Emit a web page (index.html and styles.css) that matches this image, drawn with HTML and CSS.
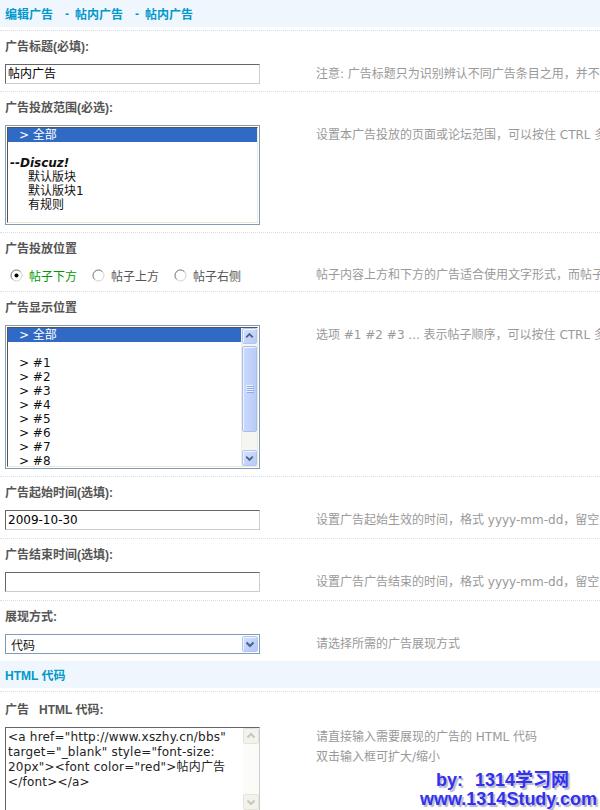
FILE: index.html
```html
<!DOCTYPE html>
<html>
<head>
<meta charset="utf-8">
<title>编辑广告</title>
<link rel="stylesheet" href="styles.css">
</head>
<body>
<div class="page">
  <div class="partition"><span>编辑广告</span><span class="sep">-</span><span>帖内广告</span><span class="sep">-</span><span>帖内广告</span></div>

  <div class="sect">
    <div class="label">广告标题(必填):</div>
    <div class="ctrl">
      <div class="cell"><div class="txt">帖内广告</div></div>
      <div class="tips">注意: 广告标题只为识别辨认不同广告条目之用，并不会在广告中显示</div>
    </div>
  </div>

  <div class="sect">
    <div class="label">广告投放范围(必选):</div>
    <div class="ctrl">
      <div class="cell">
        <div class="listbox lb-range">
          <div class="lb-inner">
            <div class="opts">
              <div class="opt sel ind1">&gt; 全部</div>
              <div class="opt"></div>
              <div class="opt ind0"><span class="grp">--Discuz!</span></div>
              <div class="opt ind2">默认版块</div>
              <div class="opt ind2">默认版块1</div>
              <div class="opt ind2">有规则</div>
            </div>
          </div>
        </div>
      </div>
      <div class="tips">设置本广告投放的页面或论坛范围，可以按住 CTRL 多选，选择“全部”为不限制</div>
    </div>
  </div>

  <div class="sect">
    <div class="label">广告投放位置</div>
    <div class="ctrl">
      <div class="cell">
        <div class="radios">
          <div class="radio on">
            <svg width="13" height="13" viewBox="0 0 13 13"><circle cx="6.5" cy="6.5" r="5.5" fill="#fff" stroke="#D2D0C4"/><path d="M2.6 10.4 A5.5 5.5 0 0 1 10.4 2.6" fill="none" stroke="#85847A"/><circle cx="6.5" cy="6.5" r="2" fill="#000"/></svg>
            <span>帖子下方</span>
          </div>
          <div class="radio">
            <svg width="13" height="13" viewBox="0 0 13 13"><circle cx="6.5" cy="6.5" r="5.5" fill="#fff" stroke="#D2D0C4"/><path d="M2.6 10.4 A5.5 5.5 0 0 1 10.4 2.6" fill="none" stroke="#85847A"/></svg>
            <span>帖子上方</span>
          </div>
          <div class="radio">
            <svg width="13" height="13" viewBox="0 0 13 13"><circle cx="6.5" cy="6.5" r="5.5" fill="#fff" stroke="#D2D0C4"/><path d="M2.6 10.4 A5.5 5.5 0 0 1 10.4 2.6" fill="none" stroke="#85847A"/></svg>
            <span>帖子右侧</span>
          </div>
        </div>
      </div>
      <div class="tips tips-radio">帖子内容上方和下方的广告适合使用文字形式，而帖子右侧的广告适合使用图片形式</div>
    </div>
  </div>

  <div class="sect">
    <div class="label">广告显示位置</div>
    <div class="ctrl">
      <div class="cell">
        <div class="listbox lb-pos">
          <div class="lb-inner">
            <div class="opts">
              <div class="opt sel ind1">&gt; 全部</div>
              <div class="opt"></div>
              <div class="opt ind1">&gt; #1</div>
              <div class="opt ind1">&gt; #2</div>
              <div class="opt ind1">&gt; #3</div>
              <div class="opt ind1">&gt; #4</div>
              <div class="opt ind1">&gt; #5</div>
              <div class="opt ind1">&gt; #6</div>
              <div class="opt ind1">&gt; #7</div>
              <div class="opt ind1">&gt; #8</div>
            </div>
            <div class="sb">
              <div class="sb-btn"><svg width="14" height="14" viewBox="0 0 14 14"><path d="M3.5 8.5 L7 5 L10.5 8.5" fill="none" stroke="#4D6185" stroke-width="2"/></svg></div>
              <div class="sb-thumb"><svg width="8" height="8" viewBox="0 0 8 8"><path d="M0 0.5 H7 M0 2.5 H7 M0 4.5 H7 M0 6.5 H7" stroke="#EEF3FE"/><path d="M1 1.5 H8 M1 3.5 H8 M1 5.5 H8 M1 7.5 H8" stroke="#8DAAF0"/></svg></div>
              <div class="sb-track"></div>
              <div class="sb-btn"><svg width="14" height="14" viewBox="0 0 14 14"><path d="M3.5 5.5 L7 9 L10.5 5.5" fill="none" stroke="#4D6185" stroke-width="2"/></svg></div>
            </div>
          </div>
        </div>
      </div>
      <div class="tips">选项 #1 #2 #3 ... 表示帖子顺序，可以按住 CTRL 多选，选择“全部”为不限制</div>
    </div>
  </div>

  <div class="sect sect-tall">
    <div class="label">广告起始时间(选填):</div>
    <div class="ctrl">
      <div class="cell"><div class="txt">2009-10-30</div></div>
      <div class="tips">设置广告起始生效的时间，格式 yyyy-mm-dd，留空为不限制起始时间</div>
    </div>
  </div>

  <div class="sect sect-tall">
    <div class="label">广告结束时间(选填):</div>
    <div class="ctrl">
      <div class="cell"><div class="txt"></div></div>
      <div class="tips">设置广告广告结束的时间，格式 yyyy-mm-dd，留空为不限制结束时间</div>
    </div>
  </div>

  <div class="sect">
    <div class="label">展现方式:</div>
    <div class="ctrl">
      <div class="cell">
        <div class="dropdown">
          <span>代码</span>
          <div class="dd-btn"><svg width="14" height="14" viewBox="0 0 14 14"><path d="M3.5 5.5 L7 9 L10.5 5.5" fill="none" stroke="#4D6185" stroke-width="2"/></svg></div>
        </div>
      </div>
      <div class="tips">请选择所需的广告展现方式</div>
    </div>
  </div>

  <div class="partition">HTML 代码</div>

  <div class="sect sect-code">
    <div class="label">广告<span class="gap"></span>HTML 代码:</div>
    <div class="ctrl">
      <div class="cell">
        <div class="textarea">
          <div class="ta-text">&lt;a href="http://www.xszhy.cn/bbs"<br>target="_blank" style="font-size:<br>20px"&gt;&lt;font color="red"&gt;帖内广告<br>&lt;/font&gt;&lt;/a&gt;</div>
          <div class="ta-sb">
            <div class="ta-btn"><svg width="14" height="14" viewBox="0 0 14 14"><path d="M3.5 8.5 L7 5 L10.5 8.5" fill="none" stroke="#C9C7BA" stroke-width="2"/></svg></div>
            <div class="ta-track"></div>
            <div class="ta-btn"><svg width="14" height="14" viewBox="0 0 14 14"><path d="M3.5 5.5 L7 9 L10.5 5.5" fill="none" stroke="#C9C7BA" stroke-width="2"/></svg></div>
          </div>
        </div>
      </div>
      <div class="tips">请直接输入需要展现的广告的 HTML 代码<br>双击输入框可扩大/缩小</div>
    </div>
  </div>
</div>

<div class="watermark">
  <div class="wm1">by:<span class="wm-num">1314</span>学习网</div>
  <div class="wm2">www.1314Study.com</div>
</div>
</body>
</html>
```

FILE: styles.css
```css
* {
  box-sizing: border-box;
}

html, body {
  margin: 0;
  padding: 0;
}

body {
  width: 600px;
  height: 810px;
  overflow: hidden;
  position: relative;
  background: #fff;
  font-family: "DejaVu Sans", "Noto Sans CJK SC", sans-serif;
  font-size: 12px;
  color: #000;
}

.page {
  width: 600px;
}

.partition {
  height: 27px;
  margin-bottom: 3px;
  padding-left: 5px;
  display: flex;
  align-items: center;
  background: #F0F6FD;
  color: #0099CC;
  font-weight: bold;
  font-family: "Liberation Sans", "Noto Sans CJK SC", sans-serif;
  white-space: nowrap;
}

.sep {
  margin: 0 6px 0 12px;
}

.sect {
  border-top: 1px dotted #D3DEE8;
  padding: 0 5px 7px;
}

.sect-tall {
  padding-bottom: 8px;
}

.label {
  margin-top: 7px;
  height: 18px;
  line-height: 18px;
  font-weight: bold;
  color: #555;
  font-family: "Liberation Sans", "Noto Sans CJK SC", sans-serif;
  white-space: nowrap;
}

.sect-code .label {
  margin-top: 9px;
}

.gap {
  display: inline-block;
  width: 10px;
}

.ctrl {
  display: flex;
  align-items: flex-start;
  margin-top: 8px;
}

.cell {
  flex: 0 0 311px;
}

.tips {
  flex: 0 0 auto;
  white-space: nowrap;
  line-height: 20px;
  color: #999;
}

.tips-radio {
  line-height: 18px;
}

/* text input */
.txt {
  width: 255px;
  height: 20px;
  border: 1px solid;
  border-color: #666 #ccc #ccc #666;
  padding-left: 2px;
  line-height: 18px;
  background: #fff;
  color: #000;
  white-space: nowrap;
}

/* radios */
.radios {
  display: flex;
  align-items: center;
  height: 18px;
}

.radio {
  display: flex;
  align-items: center;
  margin-right: 10px;
  color: #555;
  white-space: nowrap;
}

.radio svg {
  flex: none;
  margin: 0 6px 0 5px;
}

.radio.on {
  color: #009900;
}

/* list boxes */
.listbox {
  width: 255px;
  border: 1px solid #7F9DB9;
  padding: 1px;
  background: #fff;
}

.lb-inner {
  display: flex;
  overflow: hidden;
  border: 1px solid;
  border-color: #555 #ECE9D8 #ECE9D8 #555;
}

.lb-range .lb-inner {
  height: 96px;
}

.lb-pos .lb-inner {
  height: 140px;
}

.opts {
  flex: 1;
  min-width: 0;
}

.opt {
  height: 14px;
  line-height: 14px;
  white-space: nowrap;
  color: #111;
}

.opt.sel {
  background: #316AC5;
  color: #fff;
}

.ind0 { padding-left: 2px; }
.ind1 { padding-left: 11px; }
.ind2 { padding-left: 20px; }

.grp {
  font-weight: bold;
  font-style: italic;
}

/* XP-style scrollbar */
.sb {
  width: 16px;
  display: flex;
  flex-direction: column;
  background: #F5F5F1;
  border-left: 1px solid #EEEDE5;
}

.sb-btn {
  height: 16px;
  display: flex;
  align-items: center;
  justify-content: center;
  background: linear-gradient(135deg, #D3E0FD, #B6CAF7);
  border: 1px solid #B3C6F2;
  border-radius: 2px;
  box-shadow: inset 1px 1px 0 #EEF3FE;
}

.sb-thumb {
  height: 86px;
  margin-top: 2px;
  display: flex;
  align-items: center;
  justify-content: center;
  background: linear-gradient(90deg, #CADAFD, #B9CCF8);
  border: 1px solid #A8BDF0;
  border-radius: 2px;
  box-shadow: inset 1px 1px 0 #EEF3FE;
}

.sb-track {
  flex: 1;
}

/* dropdown */
.dropdown {
  width: 255px;
  height: 20px;
  border: 1px solid #7F9DB9;
  background: #fff;
  display: flex;
  align-items: center;
  justify-content: space-between;
  padding-left: 5px;
  padding-right: 1px;
  color: #111;
}

.dd-btn {
  width: 16px;
  height: 16px;
  display: flex;
  align-items: center;
  justify-content: center;
  background: linear-gradient(135deg, #D3E0FD, #B2C7F6);
  border: 1px solid #B3C6F2;
  border-radius: 2px;
  box-shadow: inset 1px 1px 0 #EEF3FE;
}

/* textarea */
.textarea {
  width: 255px;
  height: 84px;
  border: 1px solid;
  border-color: #666 #ccc #ccc #666;
  background: #fff;
  display: flex;
}

.ta-text {
  flex: 1;
  min-width: 0;
  padding: 2px 0 0 2px;
  line-height: 15px;
  letter-spacing: 0.2px;
  color: #222;
  white-space: nowrap;
  overflow: hidden;
}

.ta-sb {
  width: 16px;
  display: flex;
  flex-direction: column;
  background: #FBFBF8;
}

.ta-btn {
  height: 16px;
  display: flex;
  align-items: center;
  justify-content: center;
  background: #F3F2EC;
  border: 1px solid #E6E4DA;
  border-radius: 2px;
}

.ta-track {
  flex: 1;
}

/* watermark overlay */
.watermark {
  position: absolute;
  left: 420px;
  top: 771px;
  color: #3131F2;
  font-family: "Liberation Sans", "Noto Sans CJK SC", sans-serif;
  font-weight: bold;
  font-size: 18px;
  line-height: 19px;
  text-shadow: 2px 2px 1px #B8B8C8;
  white-space: nowrap;
}

.wm1 {
  padding-left: 16px;
}

.wm-num {
  margin-left: 12px;
}
```
